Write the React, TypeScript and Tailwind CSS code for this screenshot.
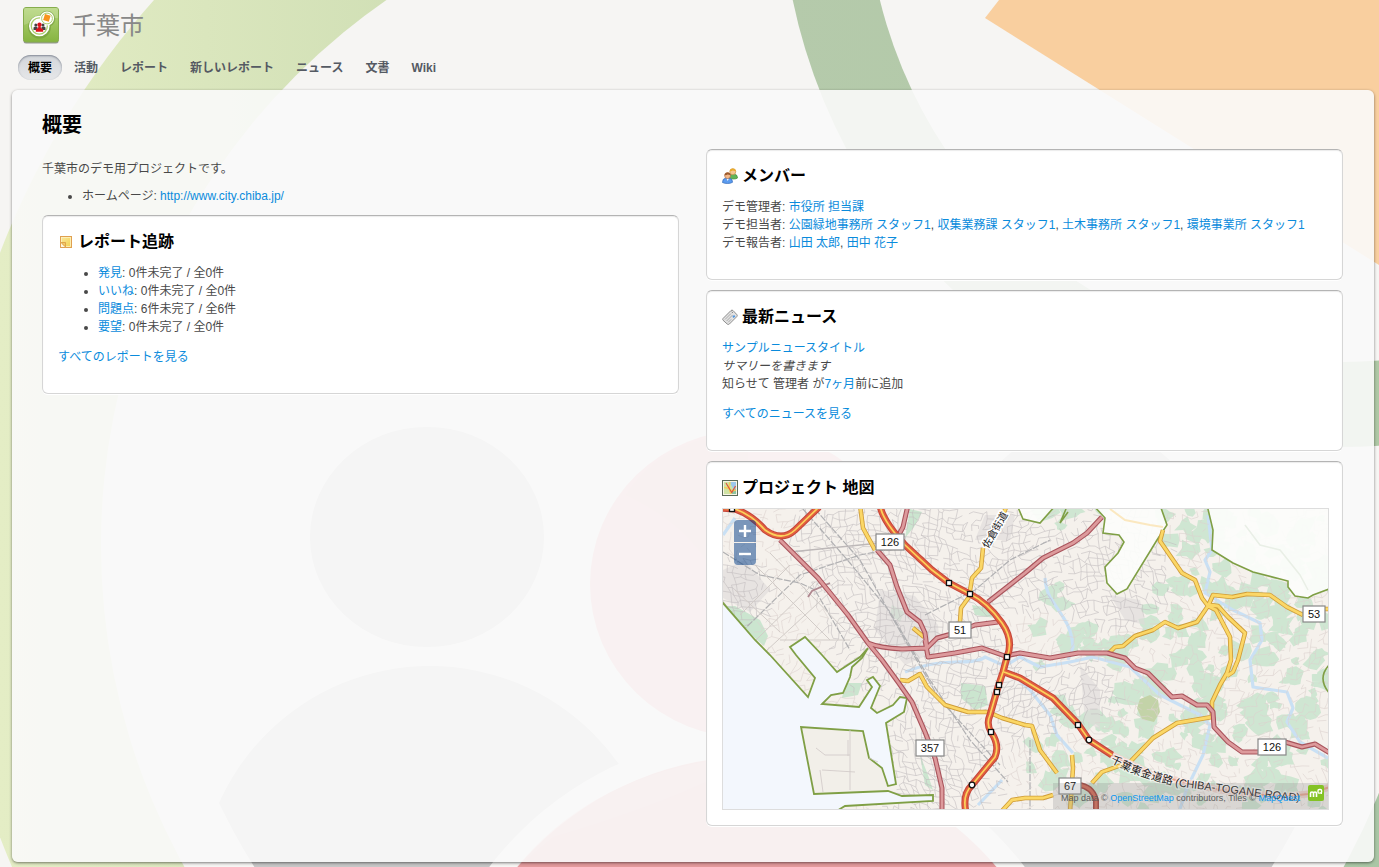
import React from "react";

const FONT = "font-['Liberation_Sans','Noto_Sans_CJK_JP',sans-serif]";

/* ---------- page background ---------- */

function Backdrop() {
  return (
    <svg
      aria-hidden="true"
      className="absolute inset-0 -z-10 h-full w-full"
      viewBox="0 0 1379 867"
      preserveAspectRatio="xMidYMid slice"
    >
      <defs>
        <linearGradient id="ring" gradientUnits="userSpaceOnUse" x1="0" y1="0" x2="1379" y2="0">
          <stop offset="0" stopColor="#e4edc5" />
          <stop offset="0.3" stopColor="#d0dfb5" />
          <stop offset="1" stopColor="#a9c6a5" />
        </linearGradient>
        <linearGradient id="arc" x1="0" y1="0" x2="1" y2="0">
          <stop offset="0" stopColor="#b5caab" />
          <stop offset="1" stopColor="#a9c6a0" />
        </linearGradient>
        <clipPath id="disc">
          <circle cx="763" cy="545" r="602" />
        </clipPath>
      </defs>
      <rect width="1379" height="867" fill="#f6f5f3" />
      <circle cx="764" cy="545" r="818" fill="url(#ring)" />
      <circle cx="764" cy="545" r="663" fill="#f6f5f3" />
      <g clipPath="url(#disc)" fill="#c6c6c6">
        <ellipse cx="427" cy="537" rx="117" ry="110" />
        <ellipse cx="1086" cy="537" rx="117" ry="110" />
        <circle cx="430" cy="897" r="231" />
        <circle cx="1084" cy="897" r="231" />
      </g>
      <circle cx="757" cy="1070" r="336" fill="#f6f5f3" />
      <circle cx="757" cy="1070" r="314" fill="#e39a9c" />
      <path d="M517 867 Q600 765 757 756 L757 756 Q680 800 553 837 Z" fill="#f3a3a5" opacity=".5" />
      <ellipse cx="748" cy="584" rx="158" ry="154" fill="#f2a6a8" />
      <path d="M626 495 Q680 520 706 560 L748 560 L748 430 Q660 440 626 495Z" fill="#dc9c9c" opacity=".5" />
      <circle cx="1342" cy="-114" r="561" fill="url(#arc)" />
      <circle cx="1342" cy="-114" r="476" fill="#f6f5f3" />
      <path d="M999 0 985 18 1379 265V0Z" fill="#f9cf9f" />
    </svg>
  );
}

/* ---------- icons ---------- */

function ProjectLogo() {
  return (
    <svg viewBox="0 0 36 37" className="h-[37px] w-9 shrink-0" aria-hidden="true">
      <defs>
        <linearGradient id="logo" x1="0" y1="0" x2="0" y2="1">
          <stop offset="0" stopColor="#b4d57a" />
          <stop offset="1" stopColor="#86b440" />
        </linearGradient>
      </defs>
      <rect x=".5" y="1.5" width="35" height="35" rx="2.5" fill="#777" opacity=".75" />
      <rect x=".5" y=".5" width="35" height="34.5" rx="2.5" fill="url(#logo)" stroke="#86ad4c" />
      <path d="M1 1h34v10Q18 10 1 18Z" fill="#fff" opacity=".17" />
      <g stroke="#6d9439" strokeWidth="4" fill="none" opacity=".5">
        <circle cx="16.5" cy="20" r="9.5" />
        <circle cx="24" cy="12" r="6.3" />
      </g>
      <circle cx="16.3" cy="19" r="9.5" fill="#a9cd6a" stroke="#fff" strokeWidth="1.6" />
      <circle cx="16.3" cy="19" r="7.4" fill="#fff" />
      <circle cx="24" cy="11.5" r="6.3" fill="#fff" stroke="#fff" strokeWidth="1.5" />
      <circle cx="24" cy="11.5" r="5.4" fill="none" stroke="#a9cd6a" />
      <path d="m22 7 5.600 1.700-1.800 6-5.700-1.700Z" fill="#f7941e" />
      <g fill="#444">
        <circle cx="12.800" cy="18" r="1.500" />
        <circle cx="20" cy="18" r="1.500" />
        <path d="M10.500 23v-2.500q2-1.500 4-.5V23zM18.500 23v-3q3-1 4 .5V23z" />
      </g>
      <circle cx="16.500" cy="17.800" r="2.200" fill="#d8141c" />
      <path d="M12.800 24.800v-2q0-1.300 2-1.600l.7-1.500h2l.7 1.500q2 .3 2 1.600v2Z" fill="#d8141c" />
    </svg>
  );
}

function NoteIcon() {
  return (
    <svg viewBox="0 0 16 16" className="size-4 shrink-0" aria-hidden="true">
      <defs>
        <linearGradient id="note" x1="0" y1="0" x2="1" y2="1">
          <stop offset="0" stopColor="#fbe9a0" />
          <stop offset="1" stopColor="#f2cf4a" />
        </linearGradient>
      </defs>
      <rect x="2.500" y="2.500" width="11" height="11" fill="url(#note)" stroke="#e0a050" />
      <rect x="3.500" y="3.500" width="9" height="9" fill="none" stroke="#fdf3c4" strokeWidth=".8" />
      <path d="M2.500 8.500 7.500 13.500H2.500Z" fill="#fdf6e4" />
      <path d="M3 8.500h4.500v4.500Z" fill="#f3c76a" stroke="#d99a40" strokeWidth=".8" />
      <path d="M2.500 8.500v5h5" stroke="#e0a050" fill="none" />
    </svg>
  );
}

function MembersIcon() {
  return (
    <svg viewBox="0 0 16 16" className="size-4 shrink-0" aria-hidden="true">
      <path d="M6.500 10.500q0-4 3-4.200h3q3 .2 3 3.700-1 1-4 1z" fill="#62b457" stroke="#3d8b35" strokeWidth=".7" />
      <circle cx="10.800" cy="3.700" r="3" fill="#f5c792" stroke="#c28a3c" strokeWidth=".6" />
      <path d="M7.600 3.500Q8 .4 10.800.4t3.200 3.200Q12 2.600 10.500 2.500 9 3.500 7.600 3.500Z" fill="#e9ab2c" />
      <path d="M.5 14.500q0-4 3-4.200h4q3 .2 3 4-2 1.200-5 1.200t-5-1z" fill="#5c9cf0" stroke="#2f67b8" strokeWidth=".7" />
      <path d="m4.500 10.500 1.200 2.500 1.200-2.500z" fill="#fff" />
      <circle cx="5.600" cy="7.600" r="3" fill="#f4b98a" stroke="#a9653a" strokeWidth=".6" />
      <path d="M2.500 7.300Q2.800 4.400 5.600 4.400t3.200 3Q7 6.600 5.500 6.400 4 7.300 2.500 7.300Z" fill="#9c5a2c" />
    </svg>
  );
}

function NewsIcon() {
  return (
    <svg viewBox="0 0 16 16" className="size-4 shrink-0" aria-hidden="true">
      <path d="m1 9.500 8-8q1-.8 2 0l4 4.300q.6 1-.2 1.800l-7.500 7.500q-1 .8-2 0L1 11.200q-.6-.9 0-1.700Z" fill="#e2e2e2" stroke="#8c8c8c" />
      <path d="m3 10.500 6-6M4.600 12l6-6M6.200 13.300l3-3" stroke="#a4a4a4" strokeWidth=".9" />
      <path d="m9.600 2.700 1.200 1.200" stroke="#777" />
      <path d="m10.300 7.800 1.700-1.800 1.400 1.300-1.700 1.700z" fill="#4f95df" />
    </svg>
  );
}

function MapIcon() {
  return (
    <svg viewBox="0 0 16 16" className="size-4 shrink-0" aria-hidden="true">
      <rect x=".5" y=".5" width="15" height="15" fill="#f7f4e4" stroke="#5a6b58" />
      <rect x="2" y="2" width="12" height="12" fill="#cfe3a4" />
      <path d="M8 2h6v8q-4-1-6-8z" fill="#9cc8ec" />
      <path d="m9 10 5-1v5h-4z" fill="#8cc4a0" />
      <path d="M2 7.500q4 0 6 2t6 .5M8 2q-2 6 1 12" stroke="#f3cf58" strokeWidth="1.500" fill="none" />
      <path d="m4 3 6 10M13.500 6l-4 7" stroke="#e2543b" strokeWidth="1.200" fill="none" />
    </svg>
  );
}

/* ---------- map ---------- */

function seeded(seed: number) {
  let s = seed;
  return () => {
    s = (s * 1664525 + 1013904223) % 4294967296;
    return s / 4294967296;
  };
}

const TOWNS: [number, number, number][] = [
  [905, 625, 65],
  [850, 545, 50],
  [930, 535, 50],
  [950, 680, 55],
  [935, 770, 55],
  [1010, 560, 45],
  [1110, 565, 50],
  [1020, 700, 35],
  [1085, 690, 25],
  [735, 590, 30],
];

function townWeight(x: number, y: number) {
  return TOWNS.reduce((m, [cx, cy, r]) => Math.max(m, 1 - Math.hypot(x - cx, y - cy) / (r * 1.500)), 0);
}

function buildStreets() {
  const rnd = seeded(41);
  const step = 6;
  const cols = 110;
  const rows = 56;
  const pts: [number, number][][] = [];
  for (let j = 0; j < rows; j++) {
    pts[j] = [];
    for (let i = 0; i < cols; i++) {
      const x = 716 + i * step;
      const y = 503 + j * step;
      pts[j][i] = [
        Math.round((x + 9 * Math.sin(y / 31) + (rnd() - 0.5) * 5) * 10) / 10,
        Math.round((y + 10 * Math.sin(x / 37) + (rnd() - 0.5) * 5) * 10) / 10,
      ];
    }
  }
  let dense = "";
  let sparse = "";
  for (let j = 0; j < rows - 1; j++) {
    for (let i = 0; i < cols - 1; i++) {
      const [x, y] = pts[j][i];
      const w = townWeight(x, y);
      for (const [a, b] of [pts[j][i + 1], pts[j + 1][i]]) {
        const r = rnd();
        if (w > 0.15 && r < 0.35 + w * 0.6) dense += `M${x} ${y}L${a} ${b}`;
        else if (r < 0.38) sparse += `M${x} ${y}L${a} ${b}`;
      }
    }
  }
  return { dense, sparse };
}

function buildWoods() {
  const rnd = seeded(7);
  let d = "";
  for (let n = 0; n < 330; n++) {
    const x = 1030 + rnd() * 300;
    const y = 509 + rnd() * 300;
    if (townWeight(x, y) > 0.25) continue;
    const r = 4 + rnd() * 9;
    const k = 9;
    for (let i = 0; i < k; i++) {
      const t = (i / k) * Math.PI * 2;
      const q = r * (0.5 + rnd() * 0.9);
      d += `${i ? "L" : "M"}${(x + Math.cos(t) * q).toFixed(1)} ${(y + Math.sin(t) * q * 0.9).toFixed(1)}`;
    }
    d += "Z";
  }
  return d;
}

const STREETS = buildStreets();
const WOODS = buildWoods();

const SEA =
  "M715 596 723 603 755 640 770 655 808 697 815 678 796 655 790 647 805 637 822 655 837 672 860 657 868 648 862 658 852 667 850 677 843 693 831 695 822 704 859 707 872 687 867 680 873 677 880 686 871 708 877 713 893 705 900 697 907 698 904 712 886 723 896 784 888 786 882 768 869 758 863 731 801 727 814 794 888 791 902 796 933 795 933 801 845 806 835 812 715 812Z";

const OUTSIDE = [
  "M1093 505 1105 518 1103 533 1119 535 1124 542 1118 553 1105 567 1107 583 1117 594 1127 589 1157 540 1167 525 1160 505Z",
  "M1207 505 1213 530 1212 550 1233 563 1253 572 1288 581 1288 587 1295 596 1308 598 1313 595 1332 588V505Z",
  "M1017 505 1023 519 1040 523 1056 505Z",
];

const RIVERS = [
  "M1045 578Q1046 590 1050 597L1063 617Q1072 630 1073 647L1068 660",
  "M905 672Q930 662 955 662T985 657L1005 666 1020 657 1040 667 1070 662 1093 657 1130 667 1160 695 1200 715 1210 725 1203 755 1187 788 1180 809",
  "M1010 672 1030 690 1050 715 1057 735 1073 753",
  "M1208 515 1212 550 1205 560 1210 572 1205 593 1233 610 1260 623 1262 640 1250 660 1253 687 1287 692 1293 708 1287 722 1300 742 1328 758",
  "M1002 780 978 805",
  "M723 535 735 518",
];

const RAILS = [
  "M723 552 760 575 800 583 815 590 850 650",
  "M803 509 850 563 890 612 930 680 970 740 1008 782",
  "M815 509 860 560 905 640 940 700 1000 765",
  "M723 650 800 575 860 555 885 550",
  "M925 615 975 590 1010 560 1050 540",
  "M1030 740V809",
];

const PINK = [
  "M780 540 818 578 848 615 868 643 882 660 898 682 912 702 925 732 935 758 942 788 942 812",
  "M868 643Q880 648 902 649L927 648 937 638 955 633 975 625 998 622",
  "M925 640 928 657 955 653 982 648 1005 656 1020 653 1050 658 1078 653 1107 653 1125 658 1135 668 1148 673 1172 697 1182 696 1197 705 1207 705 1213 712 1214 727 1228 742 1242 752 1258 752 1285 742 1302 747 1315 744 1330 753",
  "M908 505 903 527 895 542",
  "M877 550 890 565 897 587 907 612 920 622 925 633 927 648",
  "M988 602 1025 573 1043 558 1073 543 1087 533 1102 517",
];

const YELLOW = [
  "M860 505 863 528 875 550",
  "M1007 505 1003 515M983 548 981 568 972 578 969 597 961 608 960 622",
  "M913 628 924 637",
  "M1163 530 1160 541 1182 573 1195 580 1202 598 1208 606 1197 622 1178 628 1165 622 1153 630 1135 636 1123 646 1115 647 1108 654",
  "M1208 606 1213 595 1232 597 1247 594 1270 595 1287 607 1303 615M1322 609H1330",
  "M1208 606 1216 610 1230 637 1231 660 1227 673 1220 685 1212 702 1212 717 1177 723 1153 738 1130 762 1102 772 1092 783",
  "M1210 605 1218 606 1228 617 1245 633 1238 660 1233 672 1227 676",
  "M900 680 908 681 920 674 927 687 945 705 968 712 988 712 1002 718 1025 725 1032 726 1040 750 1057 773",
  "M1001 812 1012 800 1025 798 1043 798 1053 795",
  "M1072 755 1073 768 1070 812",
];

const MOTORWAY = [
  "M720 508 735 509Q752 515 765 530 782 542 795 530L819 507",
  "M880 505Q882 520 905 545L932 570 949 583 970 594Q988 603 1002 623 1014 640 1007 657L1003 672 998 687 990 715Q986 724 991 732 1000 745 995 757L972 785Q962 795 966 812",
  "M1004 672 1020 678 1053 698 1078 724 1089 740 1112 755",
];

const HIDDEN_MOTORWAY = "M1112 755 1153 775 1220 790 1280 797 1308 794 1330 787";

const JUNCTIONS: [number, number][] = [
  [732, 509],
  [949, 583],
  [970, 594],
  [1007, 657],
  [999, 685],
  [997, 692],
  [991, 732],
  [1078, 725],
];

const SHIELDS: [string, number, number, number][] = [
  ["126", 890, 542, 28],
  ["51", 960, 630, 22],
  ["53", 1314, 614, 22],
  ["357", 930, 748, 28],
  ["126", 1272, 747, 28],
  ["67", 1070, 786, 22],
];

function Roads({ paths, casing, fill, outer, inner }: { paths: string[]; casing: string; fill: string; outer: number; inner: number }) {
  const d = paths.join("");
  return (
    <g fill="none" strokeLinejoin="round">
      <path d={d} stroke={casing} strokeWidth={outer} />
      <path d={d} stroke={fill} strokeWidth={inner} />
    </g>
  );
}

function MapDrawing() {
  return (
    <svg
      className="block h-full w-full"
      viewBox="723 509 605 300"
      preserveAspectRatio="xMidYMid slice"
      role="img"
      aria-label="プロジェクト 地図"
    >
      <rect x="715" y="500" width="625" height="320" fill="#f5f1ec" />
      <path d={WOODS} fill="#cfe6d2" />
      <g fill="#cbe5cf">
        <path d="M723 606 735 606 760 620 768 636 764 646 740 625Z" />
        <path d="M961 683 985 686 988 705 975 710 961 698Z" />
        <path d="M910 509 922 512 914 527 905 538Z" />
        <path d="M920 755 928 775 933 790 925 785Z" />
        <path d="M972 605 990 608 995 618 975 615Z" />
        <path d="M892 605 904 612 900 622 890 615Z" />
        <path d="M845 683 862 683 858 695 842 698Z" />
      </g>
      <path d="M1140 699 1150 695 1158 700 1160 712 1154 722 1142 719 1137 708Z" fill="#c3d3a8" />
      <g fill="#dedbda" opacity=".6">
        <path d="M723 570 745 560 770 590 750 612 723 598Z" />
        <path d="M880 590 915 596 938 625 940 650 905 665 875 630Z" />
        <path d="M985 515 1015 515 1010 540 975 540Z" />
        <path d="M1080 665 1100 690 1100 730 1085 720Z" />
        <path d="M1110 595 1140 600 1145 625 1125 620Z" />
      </g>
      <g fill="none" stroke="#c9e0f4" strokeWidth="3.200" strokeLinejoin="round">
        <path d={RIVERS.join("")} />
      </g>
      <path d={STREETS.sparse} stroke="#dcd1cf" strokeWidth=".6" fill="none" />
      <path d={STREETS.dense} stroke="#c2bec0" strokeWidth=".6" fill="none" />
      <path d={RAILS.join("")} stroke="#b0b0b2" strokeWidth="1.200" strokeDasharray="7 1.500" fill="none" />
      <path d="M756 640 815 582M740 615 790 565M765 652 830 592M780 640 850 640M735 590 780 632M755 565 830 640M770 553 845 630" stroke="#d2ccc8" fill="none" />
      <path d="M808 597 812 591 830 583" stroke="#b08890" strokeWidth="1.800" fill="none" />
      <path d="M790 552 880 543" stroke="#bdb8b8" strokeWidth="1.500" fill="none" />
      <path d="M801 727 863 731 869 758 882 768 888 791 814 794Z" fill="#f2efe9" />
      <path d={SEA} fill="#f3f7fd" stroke="#7f9f45" strokeWidth="1.800" />
      <path d="M850 730V790M822 770 855 772M820 770 823 792M816 748 825 755H850M848 740V756M869 758 878 762" stroke="#cfc8c6" strokeWidth=".8" fill="none" />
      {OUTSIDE.map((d) => (
        <path key={d} d={d} fill="#fcfdfb" fillOpacity=".93" stroke="#7f9f45" strokeWidth="1.600" />
      ))}
      <path d="M1110 509 1125 520 1150 525 1163 527" stroke="#fbe8c0" strokeWidth="2" fill="none" />
      <path d="M1245 525 1260 545 1280 550 1300 575 1308 590" stroke="#e9efe6" strokeWidth="1.500" fill="none" />
      <path d="M1066 509 1060 523 1068 512M1330 664Q1316 678 1330 694" stroke="#7f9f45" strokeWidth="1.600" fill="none" />
      <Roads paths={YELLOW} casing="#cf9c38" fill="#fbd766" outer={4.5} inner={2.8} />
      <Roads paths={PINK} casing="#a9545c" fill="#dd9a9c" outer={5} inner={2.8} />
      <Roads paths={["M1078 785Q1092 786 1096 800V812"]} casing="#a04038" fill="#d66a55" outer={6} inner={3} />
      <Roads paths={[HIDDEN_MOTORWAY]} casing="#f0d2cb" fill="#e9a58f" outer={7} inner={2} />
      <Roads paths={MOTORWAY} casing="#c4443a" fill="#e2603f" outer={7} inner={5} />
      <path d={MOTORWAY.join("")} stroke="#fbd35c" strokeWidth="1.700" fill="none" />
      <g fill="#fff" stroke="#111" strokeWidth="1.300">
        {JUNCTIONS.map(([x, y]) => (
          <rect key={`${x}-${y}`} x={x - 2.5} y={y - 2.5} width="5" height="5" />
        ))}
        <circle cx="1089" cy="740" r="2.800" />
        <circle cx="972" cy="785" r="2.800" />
      </g>
      <g className={FONT} fill="#222">
        <text
          transform="translate(988 549) rotate(-60)"
          fontSize="10"
          stroke="#fff"
          strokeWidth="3"
          paintOrder="stroke"
        >
          佐倉街道
        </text>
        <path id="togane" d="M1110 762 1130 772Q1165 785 1190 788T1260 797 1328 801" fill="none" />
        <text fontSize="11" stroke="#fff" strokeOpacity=".6" strokeWidth="2.500" paintOrder="stroke">
          <textPath href="#togane">千葉東金道路 (CHIBA-TOGANE ROAD)</textPath>
        </text>
        {SHIELDS.map(([label, x, y, w]) => (
          <g key={`${label}-${x}`}>
            <rect x={x - w / 2} y={y - 8} width={w} height="16" fill="#fff" stroke="#888" strokeWidth="1.200" />
            <text x={x} y={y + 4} fontSize="11" textAnchor="middle" fill="#111">
              {label}
            </text>
          </g>
        ))}
      </g>
    </svg>
  );
}

function ZoomButton({ label, plus }: { label: string; plus?: boolean }) {
  return (
    <button
      type="button"
      aria-label={label}
      className={`flex h-[22px] w-[22px] items-center justify-center bg-[#003c88]/50 ${plus ? "rounded-t" : "rounded-b"}`}
    >
      <svg viewBox="0 0 12 12" className="size-3" aria-hidden="true">
        <path d={plus ? "M6 0v12M0 6h12" : "M0 6h12"} stroke="#fff" strokeWidth="2.400" />
      </svg>
    </button>
  );
}

function ProjectMap() {
  return (
    <div className="relative h-[302px] overflow-hidden border border-[#ddd]">
      <MapDrawing />
      <div className="absolute top-[11px] left-[11px] flex flex-col gap-px">
        <ZoomButton label="拡大" plus />
        <ZoomButton label="縮小" />
      </div>
      <div className="absolute right-0 bottom-0 flex h-[26px] items-start gap-2 bg-[#888]/25 pr-1 pl-2 text-[9px] leading-[30px] whitespace-nowrap text-[#5c5c5c]">
        <span>
          Map data © <Link light>OpenStreetMap</Link> contributors, Tiles © <Link light>MapQuest</Link>
        </span>
        <svg viewBox="0 0 16 16" className="mt-0.5 size-4" aria-hidden="true">
          <rect width="16" height="16" rx="2" fill="#84c225" />
          <path d="M2.500 12V8.500q0-1.500 1.500-1.500t1.500 1.500V12 8.500Q5.500 7 7 7t1.500 1.500V12" fill="none" stroke="#fff" strokeWidth="1.600" />
          <rect x="10" y="4.500" width="3.600" height="3.600" rx="1.200" fill="none" stroke="#fff" strokeWidth="1.400" />
          <path d="m12.500 7.500 1.500 1.500" stroke="#fff" />
        </svg>
      </div>
    </div>
  );
}

/* ---------- page pieces ---------- */

function Link({ children, href = "#", light }: { children: React.ReactNode; href?: string; light?: boolean }) {
  return (
    <a href={href} className={light ? "text-[#0a96f0]" : "text-[#0a8bdc] hover:underline"}>
      {children}
    </a>
  );
}

function Card({ icon, title, children, flush }: { icon: React.ReactNode; title: string; children: React.ReactNode; flush?: boolean }) {
  return (
    <section
      className={`rounded-md border border-[#d6d6d6] border-t-[#b4b4b4] bg-white pt-4 pl-[15px] shadow-[inset_0_1px_1px_rgba(0,0,0,0.08),0_1px_0_#fff] ${flush ? "pr-[13px] pb-[15px]" : "pr-[15px] pb-[27px]"}`}
    >
      <h2 className={`flex items-center gap-1 text-base leading-5 font-bold text-black ${flush ? "mb-2.5" : "mb-3"}`}>
        {icon}
        {title}
      </h2>
      {children}
    </section>
  );
}

const TABS = ["概要", "活動", "レポート", "新しいレポート", "ニュース", "文書", "Wiki"];

const TRACKERS: [string, number][] = [
  ["発見", 0],
  ["いいね", 0],
  ["問題点", 6],
  ["要望", 0],
];

const MEMBERS: [string, string[]][] = [
  ["デモ管理者", ["市役所 担当課"]],
  ["デモ担当者", ["公園緑地事務所 スタッフ1", "収集業務課 スタッフ1", "土木事務所 スタッフ1", "環境事業所 スタッフ1"]],
  ["デモ報告者", ["山田 太郎", "田中 花子"]],
];

export default function App() {
  return (
    <div className={`relative isolate min-h-screen overflow-hidden pb-[5px] text-xs leading-[18px] text-[#484848] ${FONT}`}>
      <Backdrop />

      <header className="pt-[7px]">
        <div className="flex items-center gap-[13px] pl-[23px]">
          <ProjectLogo />
          <p className="text-2xl leading-9 text-[#888]">千葉市</p>
        </div>
        <nav className="mt-[11px] mb-2.5 flex gap-0.5 pl-[18px]">
          {TABS.map((tab, i) => (
            <a
              key={tab}
              href="#"
              aria-current={i === 0 ? "page" : undefined}
              className={
                i === 0
                  ? "rounded-full bg-linear-to-b from-[#d3d6da] to-[#e6e7e9] px-2.5 pt-0.5 text-xs leading-[23px] font-bold text-black shadow-[inset_0_1px_2px_rgba(60,70,90,0.55)]"
                  : "px-2.5 pt-0.5 text-xs leading-[23px] font-bold text-[#555a63]"
              }
            >
              {tab}
            </a>
          ))}
        </nav>
      </header>

      <main className="mr-[5px] ml-3 min-h-[772px] rounded-md bg-[#fafafa]/90 pt-5 pr-[31px] pb-[35px] pl-[30px] shadow-[0_1px_3px_rgba(0,0,0,0.5)]">
        <h1 className="text-xl leading-[30px] font-bold text-black">概要</h1>

        <div className="mt-[9px] grid grid-cols-2 items-start gap-[27px]">
          <div>
            <p className="mt-[11px]">千葉市のデモ用プロジェクトです。</p>
            <ul className="mt-[9px] mb-2.5 list-disc pl-10">
              <li>
                ホームページ: <Link href="http://www.city.chiba.jp/">http://www.city.chiba.jp/</Link>
              </li>
            </ul>
            <Card icon={<NoteIcon />} title="レポート追跡">
              <ul className="list-disc pl-10">
                {TRACKERS.map(([name, count]) => (
                  <li key={name}>
                    <Link>{name}</Link>: {count}件未完了 / 全{count}件
                  </li>
                ))}
              </ul>
              <p className="mt-3">
                <Link>すべてのレポートを見る</Link>
              </p>
            </Card>
          </div>

          <div className="flex flex-col gap-2.5">
            <Card icon={<MembersIcon />} title="メンバー">
              {MEMBERS.map(([role, people]) => (
                <p key={role}>
                  {role}:{" "}
                  {people.map((person, i) => (
                    <React.Fragment key={person}>
                      {i > 0 && ", "}
                      <Link>{person}</Link>
                    </React.Fragment>
                  ))}
                </p>
              ))}
            </Card>

            <Card icon={<NewsIcon />} title="最新ニュース">
              <p>
                <Link>サンプルニュースタイトル</Link>
              </p>
              <p className="italic">サマリーを書きます</p>
              <p>
                知らせて 管理者 が<Link>7ヶ月</Link>前に追加
              </p>
              <p className="mt-3">
                <Link>すべてのニュースを見る</Link>
              </p>
            </Card>

            <Card icon={<MapIcon />} title="プロジェクト 地図" flush>
              <ProjectMap />
            </Card>
          </div>
        </div>
      </main>
    </div>
  );
}
